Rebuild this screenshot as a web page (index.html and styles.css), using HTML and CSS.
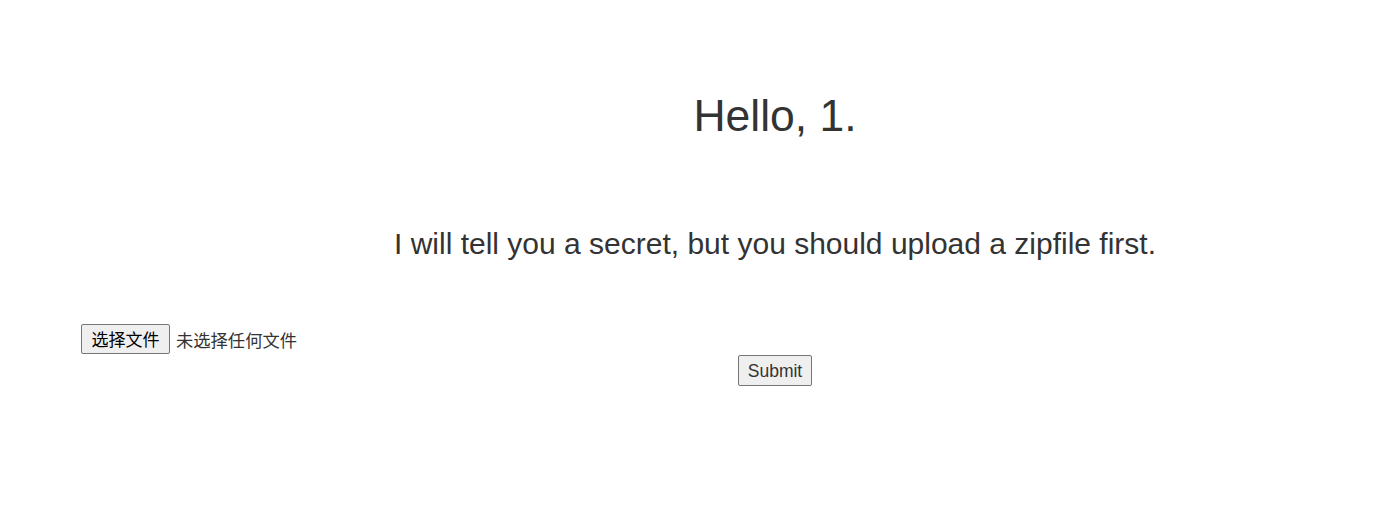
FILE: index.html
```html
<!DOCTYPE html>
<html>
<head>
<meta charset="utf-8">
<link rel="stylesheet" href="styles.css">
</head>
<body>
<div class="wrap">
  <h1 class="title centered">Hello, 1.</h1>
  <p class="lead centered">I will tell you a secret, but you should upload a zipfile first.</p>
  <form class="form">
    <div class="file-row">
      <button type="button" class="file-btn">选择文件</button><span class="file-name">未选择任何文件</span>
    </div>
    <div class="submit-row centered">
      <button type="button" class="submit-btn">Submit</button>
    </div>
  </form>
</div>
</body>
</html>
```

FILE: styles.css
```css
html, body {
  margin: 0;
  padding: 0;
  background: #fff;
}
body {
  font-family: "Liberation Sans", Arial, "Noto Sans CJK SC", sans-serif;
  color: #333;
}
.wrap {
  padding-left: 80px;
  padding-top: 88px;
}
.centered {
  padding-left: 95px;
  text-align: center;
}
.title {
  margin: 0;
  font-weight: 400;
  font-size: 44.5px;
  line-height: 56px;
}
.lead {
  margin: 80px 0 0;
  font-size: 30px;
  line-height: 40px;
}
.form {
  margin-top: 60px;
}
.file-row {
  display: flex;
  align-items: center;
  gap: 6px;
  padding-left: 1px;
  height: 30px;
}
.file-btn, .submit-btn {
  font-family: "Noto Sans CJK SC", "Liberation Sans", sans-serif;
  font-size: 17px;
  color: #000;
  background: #efefef;
  border: 1px solid #767676;
  border-radius: 2px;
  padding: 0 9.5px;
  height: 30px;
  line-height: 28px;
}
.file-name {
  font-family: "Noto Sans CJK SC", sans-serif;
  font-size: 17.3px;
  color: #333;
}
.submit-row {
  display: flex;
  justify-content: center;
  margin-top: 1px;
}
.submit-btn {
  font-family: "Liberation Sans", Arial, sans-serif;
  font-size: 17.5px;
  color: #333;
  height: 31px;
  padding: 0 8.5px;
}
```
